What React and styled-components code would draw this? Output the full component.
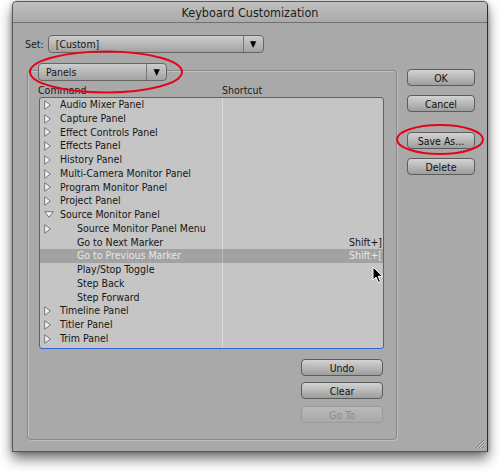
import React from 'react';
import styled, { createGlobalStyle } from 'styled-components';

const GlobalStyle = createGlobalStyle`
  html, body {
    margin: 0;
    padding: 0;
    background: #fff;
  }
  body {
    width: 500px;
    height: 473px;
    overflow: hidden;
    position: relative;
    font-family: "DejaVu Sans Condensed", "DejaVu Sans", sans-serif;
  }
`;

const Window = styled.div`
  position: relative;
  box-sizing: border-box;
  margin: 1px 0 0 12px;
  width: 476px;
  height: 451px;
  background: #a9a9a9;
  border: 1px solid #5a5a5a;
  border-right-color: #2e2e2e;
  border-radius: 5px 5px 0 0;
  box-shadow: 0 7px 13px rgba(0, 0, 0, 0.55), 0 0 4px rgba(0, 0, 0, 0.3);
`;

const TitleBar = styled.div`
  height: 20px;
  display: flex;
  align-items: center;
  justify-content: center;
  background: linear-gradient(#c0c0c0, #aaaaaa);
  border-bottom: 1px solid #727272;
  border-radius: 4px 4px 0 0;
  font-size: 12.5px;
  color: #1b1b1b;
`;

const Body = styled.div`
  padding: 12px 0 0 12px;
`;

const SetRow = styled.div`
  display: flex;
  align-items: center;
  gap: 4px;
  font-size: 10.5px;
  color: #1c1c1c;
`;

const Dropdown = styled.div`
  box-sizing: border-box;
  display: flex;
  width: ${(p) => p.width}px;
  height: 18px;
  border: 1px solid #666;
  border-radius: 4px;
  background: linear-gradient(#cdcdcd, #a2a2a2);
  font-size: 10.5px;
  color: #151515;
`;

const DropLabel = styled.span`
  flex: 1;
  display: flex;
  align-items: center;
  padding-left: 7px;
`;

const DropArrow = styled.span`
  width: 19px;
  display: flex;
  align-items: center;
  justify-content: center;
  border-left: 1px solid #777;
  font-size: 9px;
  color: #000;
`;

const MainRow = styled.div`
  display: flex;
  align-items: flex-start;
  margin-top: 6px;
`;

const Group = styled.fieldset`
  box-sizing: border-box;
  margin: 0 0 0 2px;
  width: 369px;
  padding: 0 12px 16px 10px;
  border: 1px solid #888;
  border-radius: 4px;
  box-shadow: inset 1px 1px 0 #c2c2c2, 1px 1px 0 #bdbdbd;
`;

const Legend = styled.legend`
  padding: 4px 0 0 0;
  margin: 0;
`;

const ColumnHeads = styled.div`
  display: grid;
  grid-template-columns: 184px 1fr;
  margin-top: 2px;
  line-height: 14px;
  font-size: 10.5px;
  color: #1a1a1a;
`;

const List = styled.div`
  position: relative;
  box-sizing: border-box;
  margin-left: 1px;
  width: 345px;
  height: 252px;
  border: 1px solid #2f66d6;
  border-radius: 3px;
  background: linear-gradient(to right, #c5c5c5 182px, #dcdcdc 182px, #dcdcdc 183px, #c5c5c5 183px);
`;

const Row = styled.div`
  display: grid;
  grid-template-columns: 182px 1px 1fr;
  height: 13.75px;
  font-size: 10.5px;
  line-height: 13.75px;
  color: ${(p) => (p.selected ? '#e8e8e8' : '#161616')};
  background: ${(p) => (p.selected ? '#a2a2a2' : 'transparent')};
`;

const Cell = styled.div`
  display: flex;
  align-items: center;
  white-space: nowrap;
  overflow: hidden;
`;

const Twisty = styled.span`
  width: 16px;
  padding-left: 4px;
  display: flex;
  align-items: center;
`;

const Name = styled.span`
  padding-left: ${(p) => (p.level === 2 ? 17 : 0)}px;
`;

const Divider = styled.div`
  background: ${(p) => (p.selected ? '#b8b8b8' : 'transparent')};
`;

const Keys = styled.div`
  text-align: right;
  padding-right: 1px;
`;

const EditButtons = styled.div`
  display: flex;
  flex-direction: column;
  align-items: flex-end;
  gap: 6px;
  margin-top: 10px;
  padding-right: 1px;
`;

const Button = styled.div`
  box-sizing: border-box;
  width: ${(p) => p.width}px;
  height: 17px;
  margin-top: ${(p) => p.gap || 0}px;
  display: flex;
  align-items: center;
  justify-content: center;
  border: 1px solid ${(p) => (p.disabled ? '#9a9a9a' : '#5c5c5c')};
  border-radius: 4px;
  background: ${(p) => (p.disabled ? 'linear-gradient(#b9b9b9, #a9a9a9)' : 'linear-gradient(#d3d3d3, #9d9d9d)')};
  font-size: 10.5px;
  color: ${(p) => (p.disabled ? '#8a8a8a' : '#111')};
`;

const SideButtons = styled.div`
  display: flex;
  flex-direction: column;
  margin: 10px 0 0 10px;
`;

const Grip = styled.svg`
  position: absolute;
  right: 2px;
  bottom: 2px;
`;

const Marks = styled.svg`
  position: absolute;
  left: 0;
  top: 0;
  pointer-events: none;
`;

const Cursor = styled.svg`
  position: absolute;
  left: 372px;
  top: 266px;
`;

const RightTri = () => (
  <svg width="7" height="10" viewBox="0 0 7 10">
    <polygon points="0.7,0.7 6.3,5 0.7,9.3" fill="#f4f4f4" stroke="#6a6a6a" strokeWidth="0.9" />
  </svg>
);

const DownTri = () => (
  <svg width="10" height="7" viewBox="0 0 10 7">
    <polygon points="0.7,0.7 9.3,0.7 5,6.3" fill="#f4f4f4" stroke="#6a6a6a" strokeWidth="0.9" />
  </svg>
);

const commands = [
  { name: 'Audio Mixer Panel', twisty: 'right' },
  { name: 'Capture Panel', twisty: 'right' },
  { name: 'Effect Controls Panel', twisty: 'right' },
  { name: 'Effects Panel', twisty: 'right' },
  { name: 'History Panel', twisty: 'right' },
  { name: 'Multi-Camera Monitor Panel', twisty: 'right' },
  { name: 'Program Monitor Panel', twisty: 'right' },
  { name: 'Project Panel', twisty: 'right' },
  { name: 'Source Monitor Panel', twisty: 'down' },
  { name: 'Source Monitor Panel Menu', twisty: 'right', level: 2 },
  { name: 'Go to Next Marker', level: 2, keys: 'Shift+]' },
  { name: 'Go to Previous Marker', level: 2, keys: 'Shift+[', selected: true },
  { name: 'Play/Stop Toggle', level: 2 },
  { name: 'Step Back', level: 2 },
  { name: 'Step Forward', level: 2 },
  { name: 'Timeline Panel', twisty: 'right' },
  { name: 'Titler Panel', twisty: 'right' },
  { name: 'Trim Panel', twisty: 'right' },
];

const App = () => (
  <>
    <GlobalStyle />
    <Window>
      <TitleBar>Keyboard Customization</TitleBar>
      <Body>
        <SetRow>
          <span>Set:</span>
          <Dropdown width={216}>
            <DropLabel>[Custom]</DropLabel>
            <DropArrow>▼</DropArrow>
          </Dropdown>
        </SetRow>
        <MainRow>
          <Group>
            <Legend>
              <Dropdown width={129}>
                <DropLabel>Panels</DropLabel>
                <DropArrow>▼</DropArrow>
              </Dropdown>
            </Legend>
            <ColumnHeads>
              <span>Command</span>
              <span>Shortcut</span>
            </ColumnHeads>
            <List>
              {commands.map((c) => (
                <Row key={c.name} selected={c.selected}>
                  <Cell>
                    <Twisty>
                      {c.twisty === 'right' && <RightTri />}
                      {c.twisty === 'down' && <DownTri />}
                    </Twisty>
                    <Name level={c.level}>{c.name}</Name>
                  </Cell>
                  <Divider selected={c.selected} />
                  <Keys>{c.keys}</Keys>
                </Row>
              ))}
            </List>
            <EditButtons>
              <Button width={82}>Undo</Button>
              <Button width={82}>Clear</Button>
              <Button width={82} disabled gap={1}>Go To</Button>
            </EditButtons>
          </Group>
          <SideButtons>
            <Button width={68}>OK</Button>
            <Button width={68} gap={9}>Cancel</Button>
            <Button width={68} gap={20}>Save As...</Button>
            <Button width={68} gap={9}>Delete</Button>
          </SideButtons>
        </MainRow>
      </Body>
      <Grip width="12" height="12" viewBox="0 0 12 12">
        <path d="M11 3 L3 11 M11 6 L6 11 M11 9 L9 11" stroke="#7a7a7a" strokeWidth="1" />
        <path d="M11 4 L4 11 M11 7 L7 11" stroke="#cfcfcf" strokeWidth="1" />
      </Grip>
    </Window>
    <Marks width="500" height="473">
      <ellipse cx="106" cy="72" rx="76" ry="20.5" fill="none" stroke="#e3061a" strokeWidth="2" />
      <ellipse cx="440" cy="139.5" rx="43" ry="14.5" fill="none" stroke="#e3061a" strokeWidth="2" />
    </Marks>
    <Cursor width="12" height="18" viewBox="0 0 12 18">
      <path d="M1 1 L1 14 L4 11 L6.5 16.5 L8.5 15.6 L6.2 10.3 L10.5 10.3 Z" fill="#000" stroke="#fff" strokeWidth="1" />
    </Cursor>
  </>
);

export default App;
